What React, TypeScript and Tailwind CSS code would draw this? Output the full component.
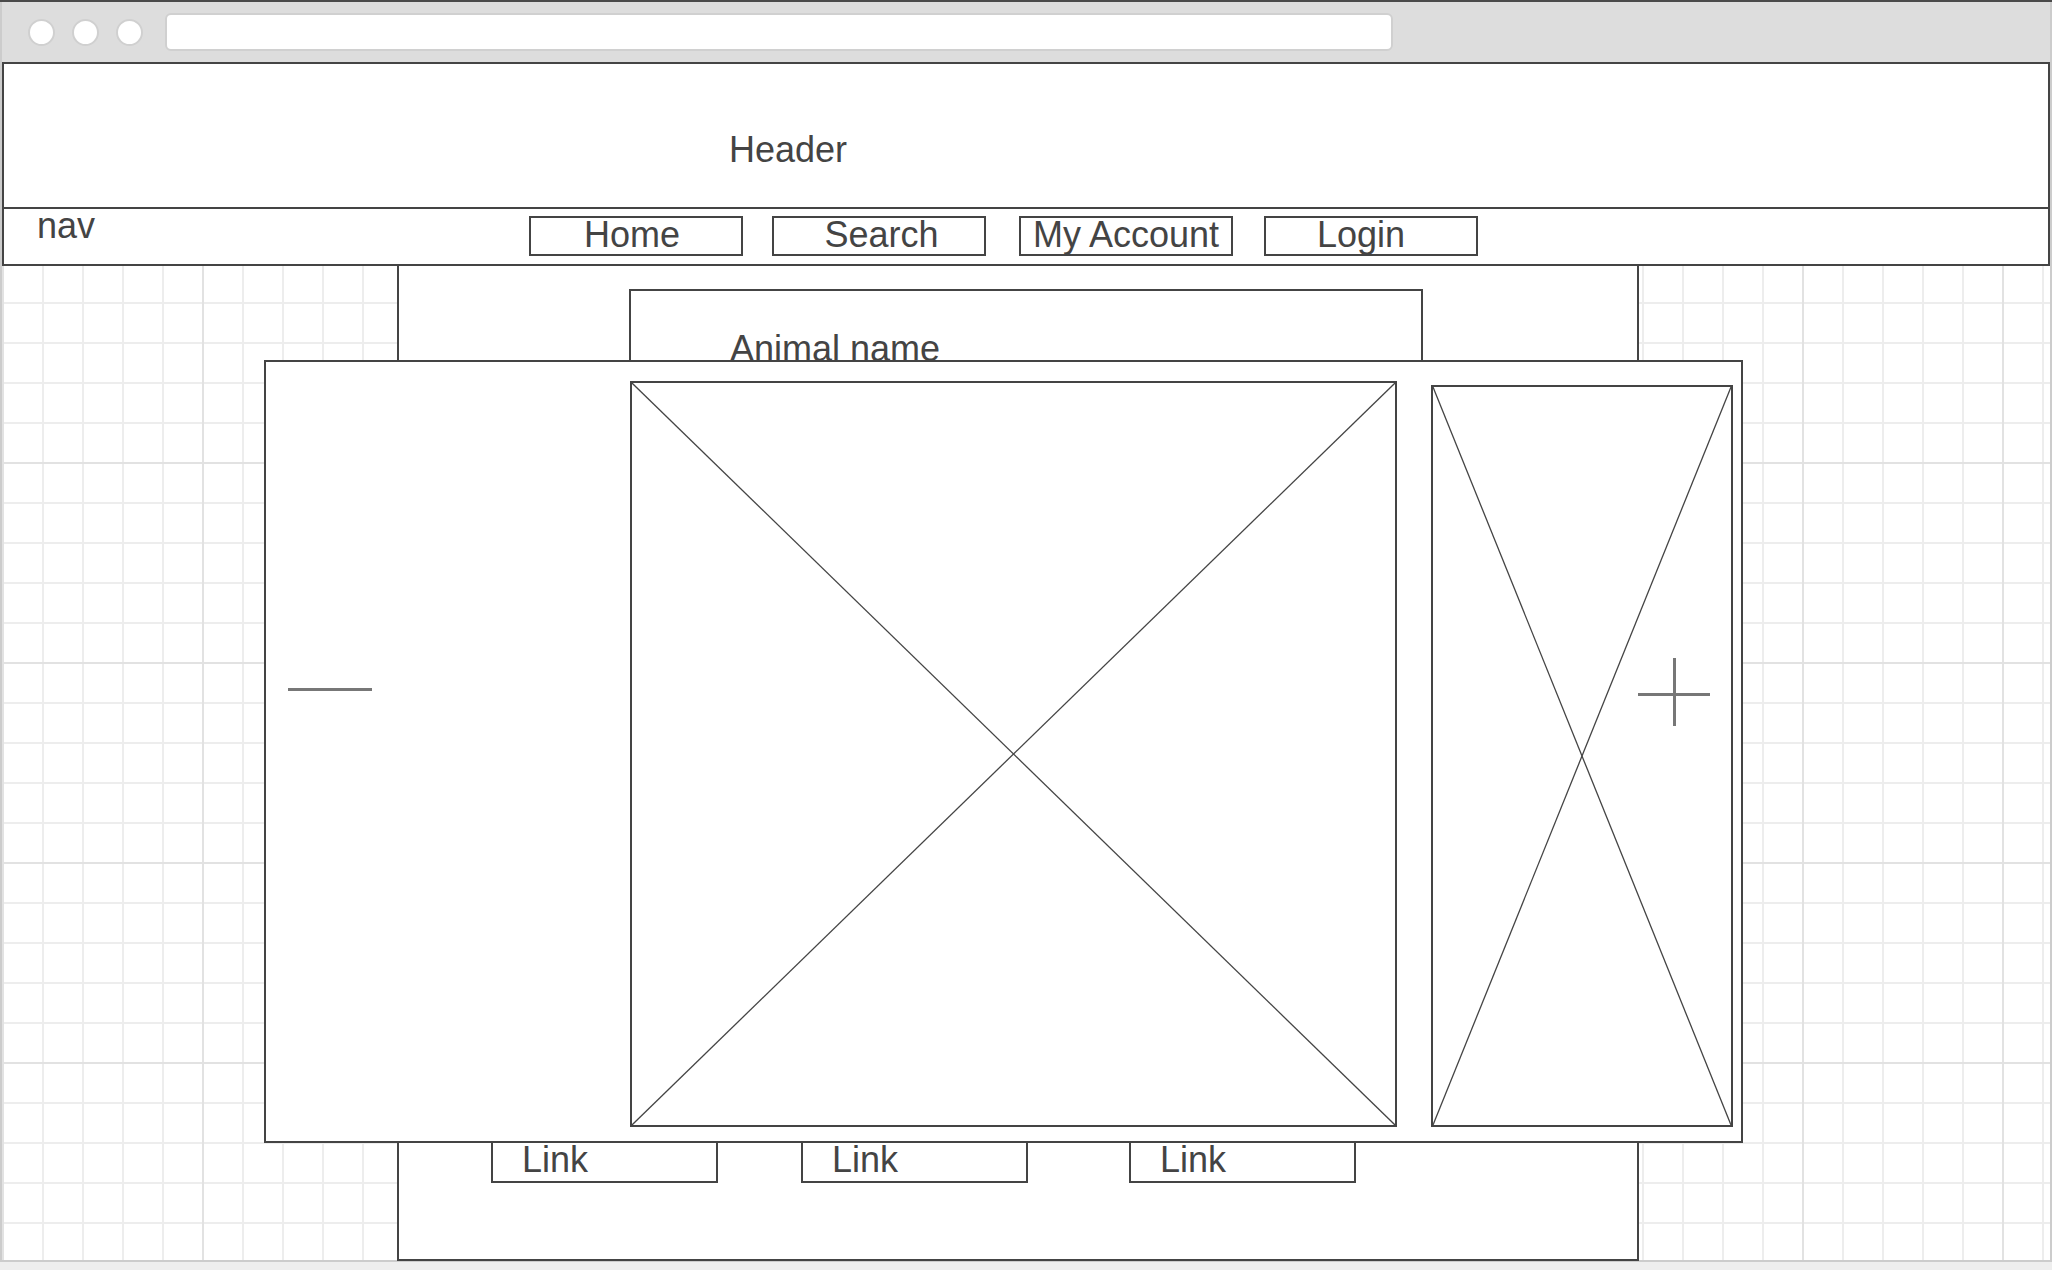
import type { ReactNode } from "react";

const Placeholder = ({
  className,
  children,
}: {
  className: string;
  children?: ReactNode;
}) => (
  <div className={"relative shrink-0 border-2 border-[#444] bg-white " + className}>
    <svg
      className="block h-full w-full"
      viewBox="0 0 100 100"
      preserveAspectRatio="none"
    >
      <line x1="0" y1="0" x2="100" y2="100" stroke="#444" strokeWidth="1.3" vectorEffect="non-scaling-stroke" />
      <line x1="100" y1="0" x2="0" y2="100" stroke="#444" strokeWidth="1.3" vectorEffect="non-scaling-stroke" />
    </svg>
    {children}
  </div>
);

const NavButton = ({ label, className }: { label: string; className: string }) => (
  <div
    className={
      "mt-[7px] flex h-[40px] w-[214px] shrink-0 items-center justify-center border-2 border-[#444] pb-[3px] leading-none " +
      className
    }
  >
    {label}
  </div>
);

const LinkBox = ({ className }: { className: string }) => (
  <div className={"h-[42px] w-[227px] shrink-0 border-2 border-[#444] pl-[29px] pt-[2px] leading-[29px] " + className}>
    Link
  </div>
);

const App = () => {
  return (
    <div className="flex h-[1270px] w-[2052px] flex-col overflow-hidden bg-[#eee] font-['Liberation_Sans',Arial,sans-serif] text-[36px] text-[#444]">
      <div className="h-[2px] shrink-0 bg-[#4a4a4a]" />

      {/* browser chrome */}
      <div className="flex h-[60px] shrink-0 items-center border-x-2 border-[#ccc] bg-[#ddd] pl-[26px]">
        <div className="flex gap-[17px]">
          <div className="h-[27px] w-[27px] rounded-full border-2 border-[#d0d0d0] bg-white" />
          <div className="h-[27px] w-[27px] rounded-full border-2 border-[#d0d0d0] bg-white" />
          <div className="h-[27px] w-[27px] rounded-full border-2 border-[#d0d0d0] bg-white" />
        </div>
        <div className="ml-[22px] h-[38px] w-[1228px] rounded-[6px] border-2 border-[#d0d0d0] bg-white" />
      </div>

      <div className="flex shrink-0 flex-col border-x-2 border-[#ccc]">
        <header className="h-[147px] border-2 border-[#444] bg-white pl-[725px] pt-[68px] leading-none">
          Header
        </header>

        <nav className="flex h-[57px] border-2 border-t-0 border-[#444] bg-white">
          <div className="w-[525px] shrink-0 pl-[33px] leading-[33px]">nav</div>
          <NavButton label="Home" className="pr-[8px]" />
          <NavButton label="Search" className="ml-[29px] pl-[5px]" />
          <NavButton label="My Account" className="ml-[33px]" />
          <NavButton label="Login" className="ml-[31px] pr-[20px]" />
        </nav>

        <main className="relative h-[994px] bg-white [background-image:linear-gradient(to_right,#e2e2e2_2px,transparent_2px),linear-gradient(to_bottom,#e2e2e2_2px,transparent_2px),linear-gradient(to_right,#ededed_2px,transparent_2px),linear-gradient(to_bottom,#ededed_2px,transparent_2px)] [background-position:0_196px,0_196px,0_36px,0_36px] [background-size:200px_200px,200px_200px,40px_40px,40px_40px]">
          <div className="ml-[395px] flex h-[995px] w-[1242px] flex-col border-x-2 border-b-2 border-[#444] bg-white">
            <div className="ml-[230px] mt-[23px] h-[300px] w-[794px] shrink-0 border-2 border-[#444] pl-[99px] pt-[40px] leading-none">
              Animal name
            </div>
            <div className="mt-[552px] flex">
              <LinkBox className="ml-[92px]" />
              <LinkBox className="ml-[83px]" />
              <LinkBox className="ml-[101px]" />
            </div>
          </div>

          {/* overlay dialog */}
          <div className="absolute left-[262px] top-[94px] flex h-[783px] w-[1479px] items-start border-2 border-[#444] bg-white">
            <div className="w-[364px] shrink-0 pl-[22px] pt-[326px]">
              <div className="h-[3px] w-[84px] bg-[#777]" />
            </div>
            <Placeholder className="mt-[19px] h-[746px] w-[767px]" />
            <Placeholder className="ml-[34px] mt-[23px] h-[742px] w-[302px]">
              <div className="absolute left-[205px] top-[306px] h-[3px] w-[72px] bg-[#777]" />
              <div className="absolute left-[240px] top-[271px] h-[68px] w-[3px] bg-[#777]" />
            </Placeholder>
          </div>
        </main>

        <div className="h-[2px] bg-[#ccc]" />
      </div>
    </div>
  );
};

export default App;
